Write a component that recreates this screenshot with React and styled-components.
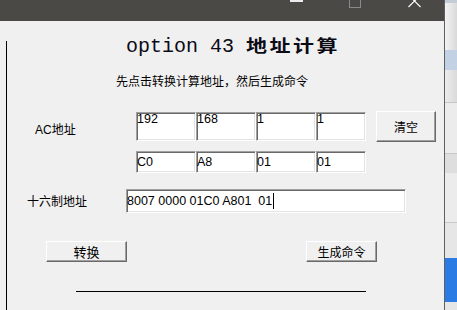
import React from "react";
import styled, { createGlobalStyle } from "styled-components";

const GlobalStyle = createGlobalStyle`
  html, body {
    margin: 0;
    padding: 0;
  }
  body {
    width: 457px;
    height: 310px;
    overflow: hidden;
    background: #e6e6e6;
    font-family: "Liberation Sans", "Noto Sans CJK SC", sans-serif;
    color: #000;
  }
`;

const Screen = styled.div`
  display: flex;
  width: 457px;
  height: 310px;
  overflow: hidden;
`;

const Window = styled.div`
  width: 444px;
  flex: none;
  display: flex;
  flex-direction: column;
  background: #f0f0f0;
  border-right: 1px solid #5f5f5f;
`;

const TitleBar = styled.div`
  height: 21px;
  flex: none;
  display: flex;
  align-items: flex-start;
  padding-left: 290px;
  background: #4b4946;
`;

const Caption = styled.svg`
  display: block;
  flex: none;
  margin-left: ${p => p.$gap || 0}px;
`;

const Body = styled.div`
  flex: 1;
  display: flex;
`;

const Edge = styled.div`
  width: 1px;
  flex: none;
  margin: 20px 0 0 6px;
  background: #000;
`;

const Content = styled.div`
  flex: 1;
  display: flex;
  flex-direction: column;
`;

const Title = styled.div`
  margin-top: 10px;
  padding-left: 119px;
  height: 27px;
  line-height: 24px;
  white-space: pre;
  color: #0b0b16;
`;

const Mono = styled.span`
  font-family: "Liberation Mono", monospace;
  font-size: 20px;
`;

// the bold caption glyphs are wider than they are tall in the original
const TitleCjk = styled.span`
  display: inline-block;
  font-family: "Noto Sans CJK SC", sans-serif;
  font-size: 21px;
  font-weight: 700;
  letter-spacing: 2.5px;
  transform: scaleY(0.8);
  transform-origin: 50% 80%;
`;

const Hint = styled.div`
  margin-top: 15px;
  padding-left: 109px;
  font-family: "Noto Sans CJK SC", sans-serif;
  font-size: 12px;
  line-height: 16px;
  white-space: nowrap;
`;

const FormRow = styled.div`
  display: flex;
  align-items: flex-start;
  margin-top: ${p => p.$top}px;
  padding-left: ${p => p.$indent || 0}px;
`;

const Label = styled.div`
  flex: none;
  box-sizing: border-box;
  width: ${p => p.$width}px;
  padding-left: ${p => p.$pad || 0}px;
  margin-top: ${p => p.$top || 0}px;
  font-size: 12px;
  line-height: 16px;
  white-space: nowrap;
`;

const Fields = styled.div`
  display: flex;
  margin-top: ${p => p.$top || 0}px;
`;

const Field = styled.div`
  box-sizing: border-box;
  width: ${p => p.$width}px;
  height: ${p => p.$height}px;
  display: flex;
  align-items: ${p => (p.$multi ? "flex-start" : "center")};
  background: #fff;
  border-top: 1px solid #a0a0a0;
  border-left: 1px solid #a0a0a0;
  border-bottom: 1px solid #fff;
  border-right: 1px solid #fff;
  box-shadow: inset 1px 1px 0 #696969, inset -1px -1px 0 #e3e3e3;
  font-family: "Liberation Sans", sans-serif;
  font-size: 12.5px;
  line-height: 13px;
  white-space: pre;
  overflow: hidden;
`;

const Caret = styled.span`
  display: inline-block;
  width: 1px;
  height: 16px;
  margin-left: 1px;
  background: #000;
`;

const Button = styled.div`
  box-sizing: border-box;
  flex: none;
  width: ${p => p.$width}px;
  height: ${p => p.$height}px;
  margin-left: ${p => p.$gap || 0}px;
  display: flex;
  align-items: center;
  justify-content: center;
  background: #f0f0f0;
  border-top: 1px solid #fff;
  border-left: 1px solid #fff;
  border-bottom: 1px solid #696969;
  border-right: 1px solid #696969;
  box-shadow: inset -1px -1px 0 #a0a0a0;
  font-family: "Noto Sans CJK SC", sans-serif;
  font-size: ${p => p.$size || 12}px;
  line-height: 16px;
`;

const Rule = styled.div`
  margin: 29px 0 0 69px;
  width: 290px;
  height: 1px;
  background: #000;
`;

const Strip = styled.div`
  flex: 1;
  display: flex;
  flex-direction: column;
`;

const Band = styled.div`
  flex: none;
  height: ${p => p.$h}px;
  background: ${p => p.$bg};
`;

const bands = [
  { h: 3, bg: "#c4ccd6" },
  { h: 47, bg: "linear-gradient(to right, #f3f3f3, #d9d9d9)" },
  { h: 20, bg: "#c3d1e4" },
  { h: 32, bg: "linear-gradient(to right, #ececec, #dadada)" },
  { h: 1, bg: "#c6c6c6" },
  { h: 50, bg: "#ececec" },
  { h: 1, bg: "#c8c8c8" },
  { h: 19, bg: "#dedede" },
  { h: 49, bg: "#ececec" },
  { h: 1, bg: "#c8c8c8" },
  { h: 35, bg: "#e6e6e6" },
  { h: 44, bg: "#2b7be4" },
  { h: 8, bg: "#e6e6e6" }
];

const ipParts = [
  { dec: "192", hex: "C0", w: 60 },
  { dec: "168", hex: "A8", w: 60 },
  { dec: "1", hex: "01", w: 60 },
  { dec: "1", hex: "01", w: 50 }
];

export default function App() {
  return (
    <>
      <GlobalStyle />
      <Screen>
        <Window>
          <TitleBar>
            <Caption width="13" height="3" viewBox="0 0 13 3">
              <rect x="0" y="0" width="13" height="2" fill="#ececec" />
            </Caption>
            <Caption $gap={46} width="12" height="8" viewBox="0 0 12 8">
              <rect x="0.5" y="-5" width="11" height="12.5" fill="none" stroke="#8a8a8a" />
            </Caption>
            <Caption $gap={47} width="13" height="8" viewBox="0 0 13 8">
              <path d="M0.5 -5 L12.5 7 M12.5 -5 L0.5 7" stroke="#fff" strokeWidth="1.1" fill="none" />
            </Caption>
          </TitleBar>
          <Body>
            <Edge />
            <Content>
              <Title>
                <Mono>option 43 </Mono>
                <TitleCjk>地址计算</TitleCjk>
              </Title>
              <Hint>先点击转换计算地址，然后生成命令</Hint>

              <FormRow $top={22}>
                <Label $width={129} $pad={28} $top={11}>AC地址</Label>
                <Fields $top={1}>
                  {ipParts.map((p, i) => (
                    <Field key={i} $width={p.w} $height={29} $multi>
                      {p.dec}
                    </Field>
                  ))}
                </Fields>
                <Button $width={60} $height={31} $gap={10}>清空</Button>
              </FormRow>

              <FormRow $top={9}>
                <Label $width={129} />
                <Fields>
                  {ipParts.map((p, i) => (
                    <Field key={i} $width={p.w} $height={22}>
                      {p.hex}
                    </Field>
                  ))}
                </Fields>
              </FormRow>

              <FormRow $top={16}>
                <Label $width={119} $pad={20} $top={5}>十六制地址</Label>
                <Field $width={280} $height={24}>
                  {"8007 0000 01C0 A801  01"}
                  <Caret />
                </Field>
              </FormRow>

              <FormRow $top={28} $indent={39}>
                <Button $width={81} $height={21} $size={13}>转换</Button>
                <Button $width={71} $height={21} $gap={179}>生成命令</Button>
              </FormRow>

              <Rule />
            </Content>
          </Body>
        </Window>
        <Strip>
          {bands.map((b, i) => (
            <Band key={i} $h={b.h} $bg={b.bg} />
          ))}
        </Strip>
      </Screen>
    </>
  );
}
